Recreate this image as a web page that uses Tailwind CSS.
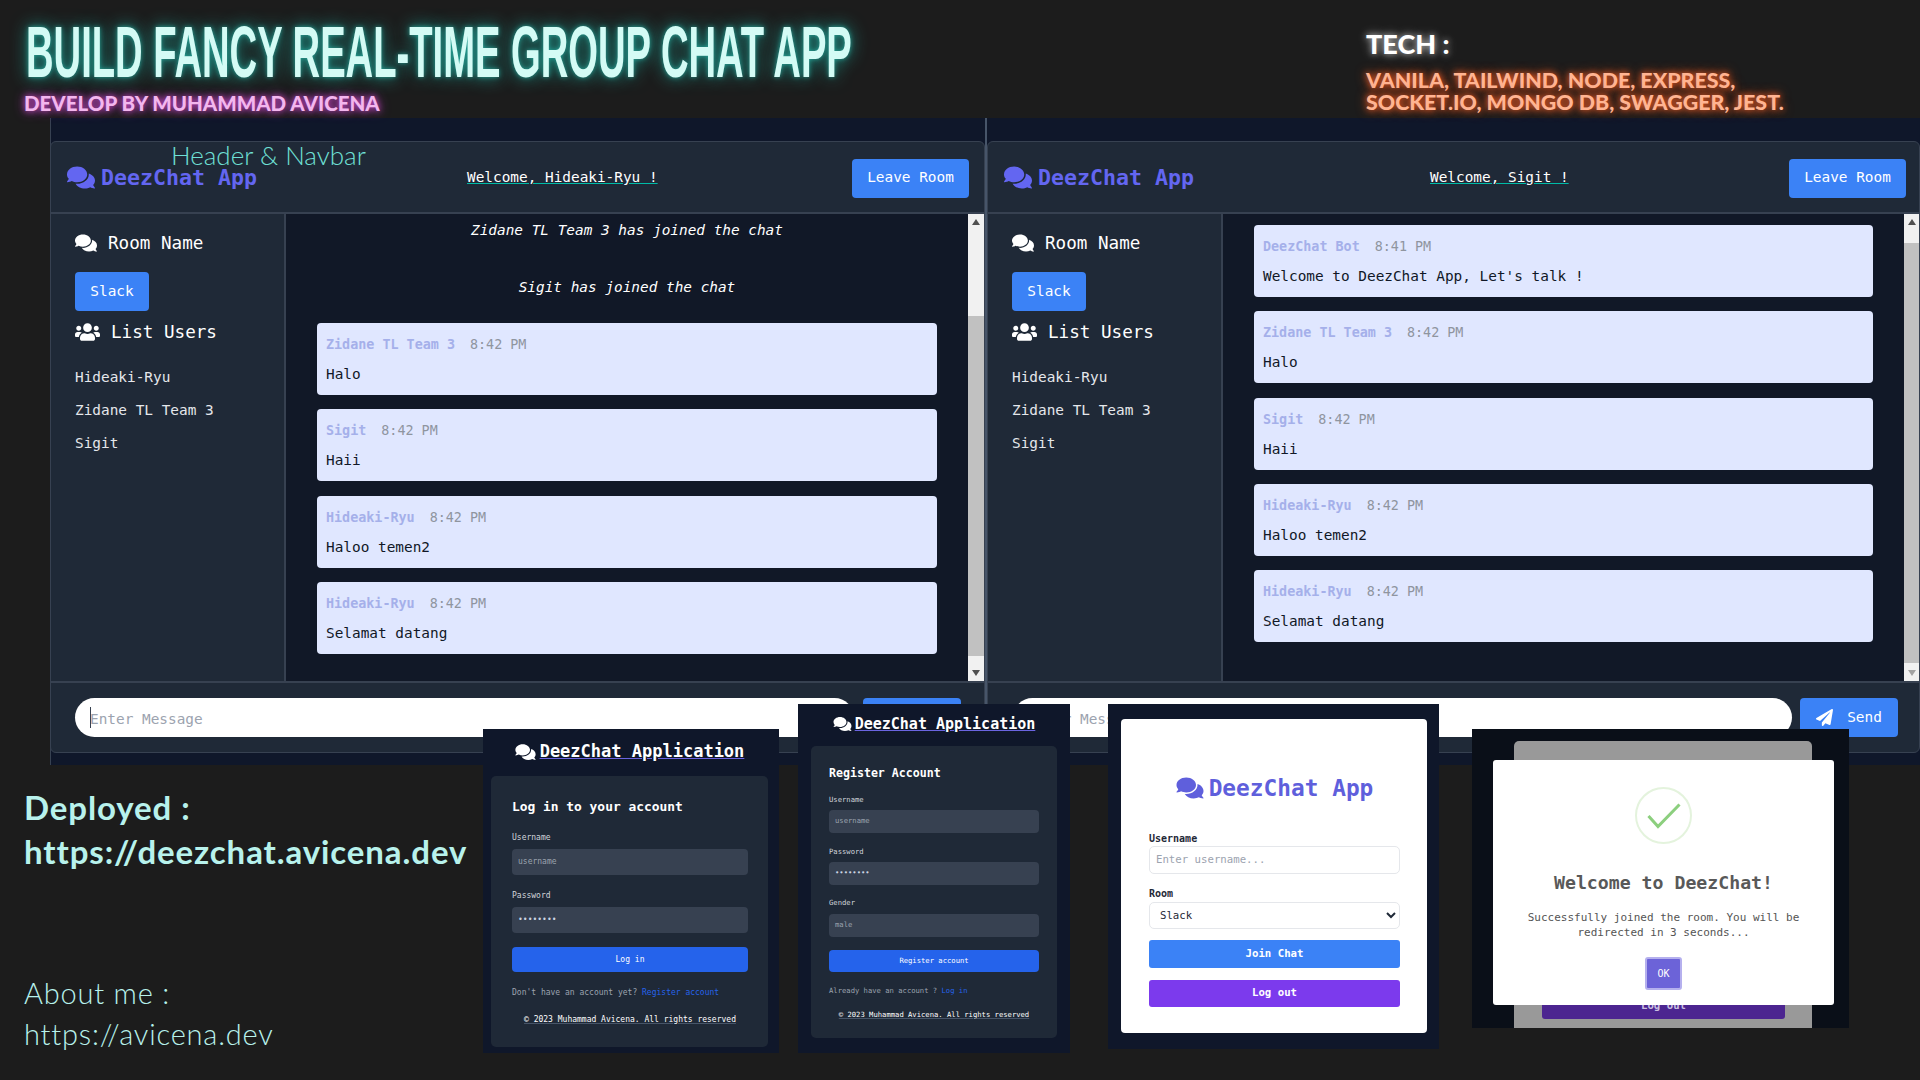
<!DOCTYPE html>
<html lang="en">
<head>
<meta charset="utf-8">
<title>DeezChat</title>
<script src="https://cdn.jsdelivr.net/npm/@tailwindcss/browser@4"></script>
</head>
<body class="m-0">
<div class="relative w-[1920px] h-[1080px] overflow-hidden bg-[#1c1c1c] font-['DejaVu_Sans_Mono','Liberation_Mono',monospace]">

  <!-- Banner -->
  <header class="h-[118px] flex font-['Lato',sans-serif]">
    <div class="w-[1366px] pl-[24px] pt-[26px]">
      <h1 class="m-0 ml-[2px] h-[52px] w-[1600px] origin-left scale-x-[0.523] whitespace-nowrap font-['Liberation_Sans',sans-serif] text-[73px] leading-[52px] font-bold text-[#d4fbf5] [text-shadow:0_0_8px_#2fd0c0aa,0_0_24px_#1d9c90]">BUILD FANCY REAL-TIME GROUP CHAT APP</h1>
      <p class="m-0 mt-[15px] text-[20.5px] leading-[20px] font-black whitespace-nowrap text-[#f3b6ee] [text-shadow:0_0_6px_#d04fd0,0_0_12px_#a030a0]">DEVELOP BY MUHAMMAD AVICENA</p>
    </div>
    <div class="pt-[30px]">
      <p class="m-0 text-[27px] leading-[28px] font-black text-white [text-shadow:0_0_6px_#ffffff99,0_0_12px_#ffffff66]">TECH :</p>
      <p class="m-0 mt-[11px] text-[21.4px] leading-[22px] font-black whitespace-nowrap text-[#ffb492] [text-shadow:0_0_6px_#f0602a,0_0_12px_#d04a18]">VANILA, TAILWIND, NODE, EXPRESS,<br>SOCKET.IO, MONGO DB, SWAGGER, JEST.</p>
    </div>
  </header>

  <!-- Chat windows -->
  <main class="flex ml-[50px] h-[647px] bg-[#0f172a] shadow-[inset_1px_0_0_#374151]">

    <!-- Window 1 -->
    <section class="w-[937px] pt-[23px] pb-[12px] border-r-[2px] border-[#475569]">
      <div class="h-full flex flex-col rounded-[6px] overflow-hidden border border-[#374151] bg-[#1f2937]">
        <div class="h-[72px] shrink-0 flex items-center pl-[16px] pr-[15px] pt-[2px] border-b-2 border-[#374151]">
          <div class="w-[400px] flex items-center gap-[6px] text-[21.6px] font-bold text-[#6366f1]">
            <svg class="w-[28px] h-[25px] fill-[#6366f1]" viewBox="0 0 576 512"><path d="M416 192c0-88.4-93.1-160-208-160S0 103.6 0 192c0 34.3 14.1 65.9 38 92-13.4 30.2-35.5 54.2-35.8 54.5-2.2 2.3-2.8 5.7-1.5 8.7S4.8 352 8 352c36.6 0 66.9-12.3 88.7-25 32.2 15.7 70.3 25 111.3 25 114.9 0 208-71.6 208-160zm122 220c23.9-26 38-57.7 38-92 0-66.9-53.5-124.2-129.3-148.1.9 6.6 1.3 13.3 1.3 20.1 0 105.9-107.7 192-240 192-10.8 0-21.3-.8-31.7-1.9C207.8 439.6 281.8 480 368 480c41 0 79.1-9.2 111.3-25 21.8 12.7 52.1 25 88.7 25 3.2 0 6.1-1.9 7.3-4.8 1.3-2.9.7-6.3-1.5-8.7-.3-.3-22.4-24.2-35.8-54.5z"/></svg>
            <span>DeezChat App</span>
          </div>
          <span class="text-[14.4px] text-white underline decoration-teal-500">Welcome, Hideaki-Ryu !</span>
          <button class="ml-auto w-[117px] h-[39px] rounded-[4px] bg-[#3b82f6] text-[14.4px] text-white">Leave Room</button>
        </div>
        <div class="h-[467px] shrink-0 flex">
          <aside class="w-[235px] shrink-0 pl-[24px] pt-[18px] border-r-2 border-[#374151] text-white">
            <div class="h-[22px] flex items-center gap-[11px] text-[17.6px]">
              <svg class="w-[22px] h-[20px] fill-white" viewBox="0 0 576 512"><path d="M416 192c0-88.4-93.1-160-208-160S0 103.6 0 192c0 34.3 14.1 65.9 38 92-13.4 30.2-35.5 54.2-35.8 54.5-2.2 2.3-2.8 5.7-1.5 8.7S4.8 352 8 352c36.6 0 66.9-12.3 88.7-25 32.2 15.7 70.3 25 111.3 25 114.9 0 208-71.6 208-160zm122 220c23.9-26 38-57.7 38-92 0-66.9-53.5-124.2-129.3-148.1.9 6.6 1.3 13.3 1.3 20.1 0 105.9-107.7 192-240 192-10.8 0-21.3-.8-31.7-1.9C207.8 439.6 281.8 480 368 480c41 0 79.1-9.2 111.3-25 21.8 12.7 52.1 25 88.7 25 3.2 0 6.1-1.9 7.3-4.8 1.3-2.9.7-6.3-1.5-8.7-.3-.3-22.4-24.2-35.8-54.5z"/></svg>
              <span>Room Name</span>
            </div>
            <div class="mt-[18px] w-[74px] h-[39px] flex items-center justify-center rounded-[4px] bg-[#3b82f6] text-[14.4px]">Slack</div>
            <div class="mt-[10px] h-[22px] flex items-center gap-[11px] text-[17.6px]">
              <svg class="w-[25px] h-[20px] fill-white" viewBox="0 0 640 512"><path d="M96 224c35.3 0 64-28.7 64-64s-28.7-64-64-64-64 28.7-64 64 28.7 64 64 64zm448 0c35.3 0 64-28.7 64-64s-28.7-64-64-64-64 28.7-64 64 28.7 64 64 64zm32 32h-64c-17.6 0-33.5 7.1-45.1 18.6 40.3 22.1 68.9 62 75.1 109.4h66c17.7 0 32-14.3 32-32v-32c0-35.3-28.7-64-64-64zm-256 0c61.9 0 112-50.1 112-112S381.9 32 320 32 208 82.1 208 144s50.1 112 112 112zm76.8 32h-8.3c-20.8 10-43.9 16-68.5 16s-47.6-6-68.5-16h-8.3C179.6 288 128 339.6 128 403.2V432c0 26.5 21.5 48 48 48h288c26.5 0 48-21.5 48-48v-28.8c0-63.6-51.6-115.2-115.2-115.2zm-223.7-13.4C161.5 263.1 145.6 256 128 256H64c-35.3 0-64 28.7-64 64v32c0 17.7 14.3 32 32 32h65.9c6.3-47.4 34.9-87.3 75.2-109.4z"/></svg>
              <span>List Users</span>
            </div>
            <ul class="m-0 mt-[23px] p-0 list-none flex flex-col gap-[11px] text-[14.4px] leading-[22px] text-[#e5e7eb]">
              <li>Hideaki-Ryu</li><li>Zidane TL Team 3</li><li>Sigit</li>
            </ul>
          </aside>
          <div class="flex-1 bg-[#111827] px-[31px] pt-[7px] text-[14.4px]">
            <p class="m-0 text-center italic leading-[18px] text-white">Zidane TL Team 3 has joined the chat</p>
            <p class="m-0 mt-[39px] text-center italic leading-[18px] text-white">Sigit has joined the chat</p>
            <div class="mt-[27px] flex flex-col gap-[14.33px]">
              <article class="h-[72px] rounded-[4px] bg-[#e0e7ff] pl-[9px] pt-[13px]">
                <p class="m-0 leading-[18px] text-[13.4px] font-bold text-[#a5b0ea]">Zidane TL Team 3<span class="ml-[15px] font-normal text-[#8f959f]">8:42 PM</span></p>
                <p class="m-0 mt-[11px] leading-[18px] text-[#111827]">Halo</p>
              </article>
              <article class="h-[72px] rounded-[4px] bg-[#e0e7ff] pl-[9px] pt-[13px]">
                <p class="m-0 leading-[18px] text-[13.4px] font-bold text-[#a5b0ea]">Sigit<span class="ml-[15px] font-normal text-[#8f959f]">8:42 PM</span></p>
                <p class="m-0 mt-[11px] leading-[18px] text-[#111827]">Haii</p>
              </article>
              <article class="h-[72px] rounded-[4px] bg-[#e0e7ff] pl-[9px] pt-[13px]">
                <p class="m-0 leading-[18px] text-[13.4px] font-bold text-[#a5b0ea]">Hideaki-Ryu<span class="ml-[15px] font-normal text-[#8f959f]">8:42 PM</span></p>
                <p class="m-0 mt-[11px] leading-[18px] text-[#111827]">Haloo temen2</p>
              </article>
              <article class="h-[72px] rounded-[4px] bg-[#e0e7ff] pl-[9px] pt-[13px]">
                <p class="m-0 leading-[18px] text-[13.4px] font-bold text-[#a5b0ea]">Hideaki-Ryu<span class="ml-[15px] font-normal text-[#8f959f]">8:42 PM</span></p>
                <p class="m-0 mt-[11px] leading-[18px] text-[#111827]">Selamat datang</p>
              </article>
            </div>
          </div>
          <div class="w-[16px] shrink-0 flex flex-col bg-[#f1f1f1]">
            <div class="h-[16px] flex items-center justify-center"><svg class="w-[8px] h-[6px] fill-[#505050]" viewBox="0 0 8 6"><path d="M4 0 8 6H0z"/></svg></div>
            <div class="mt-[86px] h-[340px] bg-[#c1c1c1]"></div>
            <div class="mt-auto h-[16px] flex items-center justify-center"><svg class="w-[8px] h-[6px] fill-[#505050]" viewBox="0 0 8 6"><path d="M0 0H8L4 6z"/></svg></div>
          </div>
        </div>
        <div class="flex-1 flex items-start pl-[24px] pr-[23px] pt-[15px] gap-[9px] border-t-2 border-[#374151]">
          <div class="relative flex-1 h-[39px]">
            <input class="w-full h-full rounded-full bg-white pl-[15px] pt-[2px] text-[14.4px] placeholder:text-[#9ca3af]" placeholder="Enter Message">
            <span class="absolute left-[15px] top-[9px] w-px h-[21px] bg-[#374151]"></span>
          </div>
          <button class="w-[98px] h-[39px] rounded-[4px] bg-[#3b82f6] text-[14.4px] text-white">Send</button>
        </div>
      </div>
    </section>

    <!-- Window 2 -->
    <section class="flex-1 pt-[23px] pb-[12px]">
      <div class="h-full flex flex-col rounded-[6px] overflow-hidden border border-[#374151] bg-[#1f2937]">
        <div class="h-[72px] shrink-0 flex items-center pl-[16px] pr-[13px] pt-[2px] border-b-2 border-[#374151]">
          <div class="w-[426px] flex items-center gap-[6px] text-[21.6px] font-bold text-[#6366f1]">
            <svg class="w-[28px] h-[25px] fill-[#6366f1]" viewBox="0 0 576 512"><path d="M416 192c0-88.4-93.1-160-208-160S0 103.6 0 192c0 34.3 14.1 65.9 38 92-13.4 30.2-35.5 54.2-35.8 54.5-2.2 2.3-2.8 5.7-1.5 8.7S4.8 352 8 352c36.6 0 66.9-12.3 88.7-25 32.2 15.7 70.3 25 111.3 25 114.9 0 208-71.6 208-160zm122 220c23.9-26 38-57.7 38-92 0-66.9-53.5-124.2-129.3-148.1.9 6.6 1.3 13.3 1.3 20.1 0 105.9-107.7 192-240 192-10.8 0-21.3-.8-31.7-1.9C207.8 439.6 281.8 480 368 480c41 0 79.1-9.2 111.3-25 21.8 12.7 52.1 25 88.7 25 3.2 0 6.1-1.9 7.3-4.8 1.3-2.9.7-6.3-1.5-8.7-.3-.3-22.4-24.2-35.8-54.5z"/></svg>
            <span>DeezChat App</span>
          </div>
          <span class="text-[14.4px] text-white underline decoration-teal-500">Welcome, Sigit !</span>
          <button class="ml-auto w-[117px] h-[39px] rounded-[4px] bg-[#3b82f6] text-[14.4px] text-white">Leave Room</button>
        </div>
        <div class="h-[467px] shrink-0 flex">
          <aside class="w-[235px] shrink-0 pl-[24px] pt-[18px] border-r-2 border-[#374151] text-white">
            <div class="h-[22px] flex items-center gap-[11px] text-[17.6px]">
              <svg class="w-[22px] h-[20px] fill-white" viewBox="0 0 576 512"><path d="M416 192c0-88.4-93.1-160-208-160S0 103.6 0 192c0 34.3 14.1 65.9 38 92-13.4 30.2-35.5 54.2-35.8 54.5-2.2 2.3-2.8 5.7-1.5 8.7S4.8 352 8 352c36.6 0 66.9-12.3 88.7-25 32.2 15.7 70.3 25 111.3 25 114.9 0 208-71.6 208-160zm122 220c23.9-26 38-57.7 38-92 0-66.9-53.5-124.2-129.3-148.1.9 6.6 1.3 13.3 1.3 20.1 0 105.9-107.7 192-240 192-10.8 0-21.3-.8-31.7-1.9C207.8 439.6 281.8 480 368 480c41 0 79.1-9.2 111.3-25 21.8 12.7 52.1 25 88.7 25 3.2 0 6.1-1.9 7.3-4.8 1.3-2.9.7-6.3-1.5-8.7-.3-.3-22.4-24.2-35.8-54.5z"/></svg>
              <span>Room Name</span>
            </div>
            <div class="mt-[18px] w-[74px] h-[39px] flex items-center justify-center rounded-[4px] bg-[#3b82f6] text-[14.4px]">Slack</div>
            <div class="mt-[10px] h-[22px] flex items-center gap-[11px] text-[17.6px]">
              <svg class="w-[25px] h-[20px] fill-white" viewBox="0 0 640 512"><path d="M96 224c35.3 0 64-28.7 64-64s-28.7-64-64-64-64 28.7-64 64 28.7 64 64 64zm448 0c35.3 0 64-28.7 64-64s-28.7-64-64-64-64 28.7-64 64 28.7 64 64 64zm32 32h-64c-17.6 0-33.5 7.1-45.1 18.6 40.3 22.1 68.9 62 75.1 109.4h66c17.7 0 32-14.3 32-32v-32c0-35.3-28.7-64-64-64zm-256 0c61.9 0 112-50.1 112-112S381.9 32 320 32 208 82.1 208 144s50.1 112 112 112zm76.8 32h-8.3c-20.8 10-43.9 16-68.5 16s-47.6-6-68.5-16h-8.3C179.6 288 128 339.6 128 403.2V432c0 26.5 21.5 48 48 48h288c26.5 0 48-21.5 48-48v-28.8c0-63.6-51.6-115.2-115.2-115.2zm-223.7-13.4C161.5 263.1 145.6 256 128 256H64c-35.3 0-64 28.7-64 64v32c0 17.7 14.3 32 32 32h65.9c6.3-47.4 34.9-87.3 75.2-109.4z"/></svg>
              <span>List Users</span>
            </div>
            <ul class="m-0 mt-[23px] p-0 list-none flex flex-col gap-[11px] text-[14.4px] leading-[22px] text-[#e5e7eb]">
              <li>Hideaki-Ryu</li><li>Zidane TL Team 3</li><li>Sigit</li>
            </ul>
          </aside>
          <div class="flex-1 bg-[#111827] pl-[31px] pr-[31px] pt-[11px] text-[14.4px]">
            <div class="flex flex-col gap-[14.25px]">
              <article class="h-[72px] rounded-[4px] bg-[#e0e7ff] pl-[9px] pt-[13px]">
                <p class="m-0 leading-[18px] text-[13.4px] font-bold text-[#a5b0ea]">DeezChat Bot<span class="ml-[15px] font-normal text-[#8f959f]">8:41 PM</span></p>
                <p class="m-0 mt-[11px] leading-[18px] text-[#111827]">Welcome to DeezChat App, Let's talk !</p>
              </article>
              <article class="h-[72px] rounded-[4px] bg-[#e0e7ff] pl-[9px] pt-[13px]">
                <p class="m-0 leading-[18px] text-[13.4px] font-bold text-[#a5b0ea]">Zidane TL Team 3<span class="ml-[15px] font-normal text-[#8f959f]">8:42 PM</span></p>
                <p class="m-0 mt-[11px] leading-[18px] text-[#111827]">Halo</p>
              </article>
              <article class="h-[72px] rounded-[4px] bg-[#e0e7ff] pl-[9px] pt-[13px]">
                <p class="m-0 leading-[18px] text-[13.4px] font-bold text-[#a5b0ea]">Sigit<span class="ml-[15px] font-normal text-[#8f959f]">8:42 PM</span></p>
                <p class="m-0 mt-[11px] leading-[18px] text-[#111827]">Haii</p>
              </article>
              <article class="h-[72px] rounded-[4px] bg-[#e0e7ff] pl-[9px] pt-[13px]">
                <p class="m-0 leading-[18px] text-[13.4px] font-bold text-[#a5b0ea]">Hideaki-Ryu<span class="ml-[15px] font-normal text-[#8f959f]">8:42 PM</span></p>
                <p class="m-0 mt-[11px] leading-[18px] text-[#111827]">Haloo temen2</p>
              </article>
              <article class="h-[72px] rounded-[4px] bg-[#e0e7ff] pl-[9px] pt-[13px]">
                <p class="m-0 leading-[18px] text-[13.4px] font-bold text-[#a5b0ea]">Hideaki-Ryu<span class="ml-[15px] font-normal text-[#8f959f]">8:42 PM</span></p>
                <p class="m-0 mt-[11px] leading-[18px] text-[#111827]">Selamat datang</p>
              </article>
            </div>
          </div>
          <div class="w-[15px] shrink-0 flex flex-col bg-[#f1f1f1]">
            <div class="h-[16px] flex items-center justify-center"><svg class="w-[8px] h-[6px] fill-[#505050]" viewBox="0 0 8 6"><path d="M4 0 8 6H0z"/></svg></div>
            <div class="mt-[13px] h-[420px] bg-[#c1c1c1]"></div>
            <div class="mt-auto h-[16px] flex items-center justify-center"><svg class="w-[8px] h-[6px] fill-[#a3a3a3]" viewBox="0 0 8 6"><path d="M0 0H8L4 6z"/></svg></div>
          </div>
        </div>
        <div class="flex-1 flex items-start pl-[25px] pr-[21px] pt-[15px] gap-[8px] border-t-2 border-[#374151]">
          <input class="flex-1 h-[39px] rounded-full bg-white pl-[15px] pt-[2px] text-[14.4px] placeholder:text-[#9ca3af]" placeholder="Enter Message">
          <button class="w-[98px] h-[39px] flex items-center justify-center gap-[14px] rounded-[4px] bg-[#3b82f6] text-[14.4px] text-white">
            <svg class="w-[17px] h-[17px] fill-white" viewBox="0 0 512 512"><path d="M476 3.2L12.5 270.6c-18.1 10.4-15.8 35.6 2.2 43.2L121 358.4l287.3-253.2c5.5-4.9 13.3 2.6 8.6 8.3L176 407v80.5c0 23.6 28.5 32.9 42.5 15.8L282 426l124.6 52.2c14.2 6 30.4-2.9 33-18.2l72-432C515 7.8 493.3-6.8 476 3.2z"/></svg>
            <span>Send</span>
          </button>
        </div>
      </div>
    </section>
  </main>

  <!-- Links -->
  <div class="pl-[24px] font-['Lato',sans-serif] text-[#b8f2ec]">
    <p class="m-0 mt-[20px] text-[33px] leading-[44px] font-bold tracking-[0.9px] whitespace-nowrap">Deployed :<br>https://deezchat.avicena.dev</p>
    <p class="m-0 mt-[99px] text-[29px] leading-[41px] font-light tracking-[0.8px] whitespace-nowrap">About me :<br>https://avicena.dev</p>
  </div>

  <!-- Header & Navbar label -->
  <span class="absolute left-[171px] top-[140px] font-['Lato',sans-serif] font-light text-[26px] leading-[30px] text-[#6fe0d6] whitespace-nowrap">Header &amp; Navbar</span>

  <!-- Login card -->
  <div class="absolute left-[483px] top-[729px] w-[296px] h-[324px] pl-[8px] pr-[11px] bg-[#0f172a] flex flex-col">
    <div class="h-[47px] shrink-0 pb-[2px] flex items-center justify-center gap-[4px] text-[17px] font-bold text-white">
      <svg class="w-[21px] h-[18px] fill-white" viewBox="0 0 576 512"><path d="M416 192c0-88.4-93.1-160-208-160S0 103.6 0 192c0 34.3 14.1 65.9 38 92-13.4 30.2-35.5 54.2-35.8 54.5-2.2 2.3-2.8 5.7-1.5 8.7S4.8 352 8 352c36.6 0 66.9-12.3 88.7-25 32.2 15.7 70.3 25 111.3 25 114.9 0 208-71.6 208-160zm122 220c23.9-26 38-57.7 38-92 0-66.9-53.5-124.2-129.3-148.1.9 6.6 1.3 13.3 1.3 20.1 0 105.9-107.7 192-240 192-10.8 0-21.3-.8-31.7-1.9C207.8 439.6 281.8 480 368 480c41 0 79.1-9.2 111.3-25 21.8 12.7 52.1 25 88.7 25 3.2 0 6.1-1.9 7.3-4.8 1.3-2.9.7-6.3-1.5-8.7-.3-.3-22.4-24.2-35.8-54.5z"/></svg>
      <span class="underline decoration-[#6a64e0]">DeezChat Application</span>
    </div>
    <div class="h-[271px] rounded-[5px] bg-[#1f2937] px-[21px] pr-[20px] pt-[22px] text-[8px] text-[#d1d5db]">
      <p class="m-0 text-[12.9px] leading-[18px] font-bold text-white">Log in to your account</p>
      <p class="m-0 mt-[16px] leading-[12px]">Username</p>
      <div class="mt-[5px] h-[26px] flex items-center rounded-[4px] bg-[#374151] px-[6px] text-[#9ca3af]">username</div>
      <p class="m-0 mt-[15px] leading-[12px]">Password</p>
      <div class="mt-[5px] h-[26px] flex items-center rounded-[4px] bg-[#374151] px-[6px] text-[#cbd5e1]">••••••••</div>
      <div class="mt-[14px] h-[25px] flex items-center justify-center rounded-[4px] bg-[#2563eb] text-white">Log in</div>
      <p class="m-0 mt-[15px] leading-[12px] text-[#9ca3af]">Don't have an account yet? <span class="text-[#2563eb]">Register account</span></p>
      <p class="m-0 mt-[15px] leading-[12px] text-center text-white underline decoration-[#475569]">© 2023 Muhammad Avicena. All rights reserved</p>
    </div>
  </div>

  <!-- Register card -->
  <div class="absolute left-[798px] top-[704px] w-[272px] h-[349px] px-[13px] bg-[#0f172a] flex flex-col">
    <div class="h-[42px] shrink-0 pb-[2px] flex items-center justify-center gap-[3px] text-[15px] font-bold text-white">
      <svg class="w-[19px] h-[16px] fill-white" viewBox="0 0 576 512"><path d="M416 192c0-88.4-93.1-160-208-160S0 103.6 0 192c0 34.3 14.1 65.9 38 92-13.4 30.2-35.5 54.2-35.8 54.5-2.2 2.3-2.8 5.7-1.5 8.7S4.8 352 8 352c36.6 0 66.9-12.3 88.7-25 32.2 15.7 70.3 25 111.3 25 114.9 0 208-71.6 208-160zm122 220c23.9-26 38-57.7 38-92 0-66.9-53.5-124.2-129.3-148.1.9 6.6 1.3 13.3 1.3 20.1 0 105.9-107.7 192-240 192-10.8 0-21.3-.8-31.7-1.9C207.8 439.6 281.8 480 368 480c41 0 79.1-9.2 111.3-25 21.8 12.7 52.1 25 88.7 25 3.2 0 6.1-1.9 7.3-4.8 1.3-2.9.7-6.3-1.5-8.7-.3-.3-22.4-24.2-35.8-54.5z"/></svg>
      <span class="underline decoration-[#6a64e0]">DeezChat Application</span>
    </div>
    <div class="h-[292px] rounded-[5px] bg-[#1f2937] pl-[18px] pr-[18px] pt-[18px] text-[7.2px] text-[#d1d5db]">
      <p class="m-0 text-[11.6px] leading-[18px] font-bold text-white">Register Account</p>
      <p class="m-0 mt-[13px] leading-[10px]">Username</p>
      <div class="mt-[5px] h-[23px] flex items-center rounded-[4px] bg-[#374151] px-[6px] text-[#9ca3af]">username</div>
      <p class="m-0 mt-[14px] leading-[10px]">Password</p>
      <div class="mt-[5px] h-[23px] flex items-center rounded-[4px] bg-[#374151] px-[6px] text-[#cbd5e1]">••••••••</div>
      <p class="m-0 mt-[13px] leading-[10px]">Gender</p>
      <div class="mt-[6px] h-[23px] flex items-center rounded-[4px] bg-[#374151] px-[6px] text-[#9ca3af]">male</div>
      <div class="mt-[13px] h-[22px] flex items-center justify-center rounded-[4px] bg-[#2563eb] text-white">Register account</div>
      <p class="m-0 mt-[14px] leading-[10px] text-[#9ca3af]">Already have an account ? <span class="text-[#2563eb]">Log in</span></p>
      <p class="m-0 mt-[14px] leading-[10px] text-center text-white underline decoration-[#475569]">© 2023 Muhammad Avicena. All rights reserved</p>
    </div>
  </div>

  <!-- Join card -->
  <div class="absolute left-[1108px] top-[704px] w-[331px] h-[345px] pl-[13px] pr-[12px] pt-[15px] bg-[#0f172a]">
    <div class="h-[314px] rounded-[4px] bg-white pl-[28px] pr-[27px] pt-[54px] text-[10.7px]">
      <div class="h-[30px] flex items-center justify-center gap-[5px] text-[22.8px] font-bold text-[#5f5fdc]">
        <svg class="w-[28px] h-[24px] fill-[#5f5fdc]" viewBox="0 0 576 512"><path d="M416 192c0-88.4-93.1-160-208-160S0 103.6 0 192c0 34.3 14.1 65.9 38 92-13.4 30.2-35.5 54.2-35.8 54.5-2.2 2.3-2.8 5.7-1.5 8.7S4.8 352 8 352c36.6 0 66.9-12.3 88.7-25 32.2 15.7 70.3 25 111.3 25 114.9 0 208-71.6 208-160zm122 220c23.9-26 38-57.7 38-92 0-66.9-53.5-124.2-129.3-148.1.9 6.6 1.3 13.3 1.3 20.1 0 105.9-107.7 192-240 192-10.8 0-21.3-.8-31.7-1.9C207.8 439.6 281.8 480 368 480c41 0 79.1-9.2 111.3-25 21.8 12.7 52.1 25 88.7 25 3.2 0 6.1-1.9 7.3-4.8 1.3-2.9.7-6.3-1.5-8.7-.3-.3-22.4-24.2-35.8-54.5z"/></svg>
        <span>DeezChat App</span>
      </div>
      <p class="m-0 mt-[30px] text-[10px] leading-[12px] font-bold text-[#1f2937]">Username</p>
      <div class="mt-[1px] h-[28px] flex items-center rounded-[5px] border border-[#e5e7eb] px-[6px] text-[#9ca3af]">Enter username...</div>
      <p class="m-0 mt-[14px] text-[10px] leading-[12px] font-bold text-[#1f2937]">Room</p>
      <select class="mt-[2px] w-full h-[27px] block rounded-[5px] border border-[#e5e7eb] bg-white px-[6px] text-[#1f2937]"><option>Slack</option></select>
      <div class="mt-[11px] h-[28px] flex items-center justify-center rounded-[3px] bg-[#3b82f6] font-bold text-white">Join Chat</div>
      <div class="mt-[12px] h-[27px] flex items-center justify-center rounded-[3px] bg-[#7c3aed] font-bold text-white">Log out</div>
    </div>
  </div>

  <!-- Success modal card -->
  <div class="absolute left-[1472px] top-[729px] w-[377px] h-[299px] overflow-hidden bg-[#0a0f18]">
    <div class="absolute left-[42px] top-[12px] w-[298px] h-[287px] rounded-t-[5px] bg-[#999999]">
      <div class="absolute left-[28px] top-[235px] w-[243px] h-[43px] rounded-[3px] bg-[#4c2590] text-[10.7px] font-bold text-[#c9bfe0] flex items-center justify-center pt-[18px]">Log out</div>
    </div>
    <div class="absolute left-[21px] top-[31px] w-[341px] h-[245px] rounded-[3px] bg-white flex flex-col items-center pt-[27px]">
      <div class="w-[57px] h-[57px] rounded-full border-[2.5px] border-[#e4f3dd] flex items-center justify-center">
        <svg class="w-[34px] h-[26px]" viewBox="0 0 34 26" fill="none" stroke="#8ccf7e" stroke-width="3"><path d="M1.5 13 11 23.5 32.5 1.5"/></svg>
      </div>
      <h2 class="m-0 mt-[25px] text-[18.2px] leading-[28px] font-bold text-[#595959]">Welcome to DeezChat!</h2>
      <p class="m-0 mt-[13px] text-[11px] leading-[15px] text-center text-[#545454]">Successfully joined the room. You will be<br>redirected in 3 seconds...</p>
      <div class="mt-[17px] w-[37px] h-[33px] rounded-[3px] border-2 border-[#b5b0ee] bg-[#6c63d8] flex items-center justify-center text-[10px] text-white">OK</div>
    </div>
  </div>
</div>
</body>
</html>
